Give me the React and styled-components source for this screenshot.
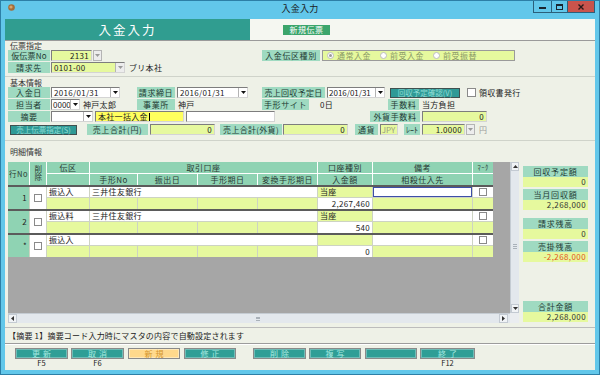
import React from 'react';
import styled, { createGlobalStyle } from 'styled-components';

const FONT = `"Noto Sans CJK JP", "Noto Sans", "DejaVu Sans", sans-serif`;
const MINT = '#9fdac1';
const YG = '#e6f99e';
const HEAD = '#8fd3b3';
const COLS = '21px 16px 42px 47px 59px 59px 59px 54px 99px 20px';

const GlobalStyle = createGlobalStyle`
  html, body { margin: 0; padding: 0; background: #62c7ea; }
  body { font-family: ${FONT}; font-size: 8px; line-height: 1.1; color: #222; }
  * { box-sizing: border-box; }
`;

const Window = styled.div`
  width: 600px;
  height: 375px;
  background: #62c7ea;
  border: 1px solid #2d7fa6;
  display: flex;
  flex-direction: column;
  overflow: hidden;
`;

const TitleBar = styled.div`
  height: 18px;
  flex: none;
  display: grid;
  grid-template-columns: 1fr auto 1fr;
  align-items: start;
`;
const AppIcon = styled.svg`
  margin: 3px 0 0 7px;
`;
const Title = styled.div`
  font-size: 9px;
  line-height: 16px;
  color: #1b1b1b;
  letter-spacing: 0.3px;
`;
const Controls = styled.div`
  justify-self: end;
  display: flex;
  margin-right: 4px;
  height: 12px;
  border: 1px solid #2b5f7a;
  border-top: none;
`;
const CtrlBtn = styled.div`
  width: ${p => p.$w}px;
  display: flex;
  align-items: center;
  justify-content: center;
  background: ${p => (p.$close ? '#c9544c' : 'transparent')};
  & + & { border-left: 1px solid #2b5f7a; }
`;

const Body = styled.div`
  margin: 0 4px;
  height: 351px;
  background: #eef1e7;
  display: flex;
  flex-direction: column;
  flex: none;
`;

const Header = styled.div`
  height: 22px;
  display: flex;
  flex: none;
  border-bottom: 1px solid #9a9a9a;
`;
const TealBand = styled.div`
  width: 245px;
  background: #309d90;
  color: #fff;
  font-size: 12.5px;
  letter-spacing: 2px;
  display: flex;
  align-items: center;
  justify-content: center;
`;
const HeadRight = styled.div`
  flex: 1;
  background: #f5f7f1;
  display: flex;
  align-items: center;
  padding-left: 33px;
`;
const Badge = styled.div`
  width: 47px;
  height: 10px;
  background: #3ba56b;
  color: #fff;
  font-size: 8px;
  line-height: 10px;
  text-align: center;
  letter-spacing: 0.5px;
`;

const SectionTitle = styled.div`
  height: ${p => p.$h}px;
  line-height: ${p => p.$h}px;
  margin: ${p => p.$mt || 0}px 0 0 5px;
  font-size: 8px;
  color: #333;
  flex: none;
`;
const Rule = styled.div`
  height: 1px;
  margin-top: ${p => p.$mt}px;
  background: #cfd3ca;
  flex: none;
`;

const Row = styled.div`
  display: flex;
  height: 11px;
  margin-top: ${p => p.$mt || 0}px;
  flex: none;
  align-items: stretch;
`;
const Group = styled.div`
  display: flex;
  width: ${p => p.$w}px;
  margin-left: ${p => p.$ml || 0}px;
  flex: none;
  align-items: stretch;
`;
const Label = styled.div`
  width: ${p => p.$w}px;
  margin-left: ${p => p.$ml || 0}px;
  background: ${MINT};
  color: #1e3b33;
  display: flex;
  align-items: center;
  justify-content: center;
  white-space: nowrap;
  letter-spacing: ${p => p.$ls ?? 0.6}px;
  line-height: 1;
  flex: none;
`;
const TONES = { yg: YG, white: '#fff', yellow: '#ffff5e' };
const Field = styled.div`
  width: ${p => p.$w}px;
  margin-left: ${p => p.$ml || 0}px;
  background: ${p => TONES[p.$tone || 'yg']};
  border: 1px solid;
  border-color: #7d7d7d #d4d4d4 #d4d4d4 #7d7d7d;
  display: flex;
  align-items: center;
  justify-content: ${p => (p.$align === 'right' ? 'flex-end' : p.$align === 'center' ? 'center' : 'flex-start')};
  padding: 0 ${p => (p.$arrow ? 0 : 2)}px 0 ${p => (p.$tight ? 1 : 2)}px;
  color: ${p => p.$color || '#222'};
  white-space: nowrap;
  overflow: hidden;
  letter-spacing: ${p => (p.$tight ? 0 : 0.3)}px;
  line-height: 1;
  flex: none;
`;
const Value = styled.span`
  flex: 1;
  min-width: 0;
  text-align: ${p => p.$align || 'left'};
  padding-right: 1px;
`;
const Caret = styled.span`
  display: inline-block;
  width: 1px;
  height: 8px;
  background: #000;
  margin-left: 1px;
  vertical-align: middle;
`;
const Arrow = styled.div`
  width: 9px;
  height: 100%;
  background: ${p => (p.$gray ? '#ededed' : '#fff')};
  border-left: 1px solid #b4b4b4;
  display: flex;
  align-items: center;
  justify-content: center;
  flex: none;
`;
const LoneArrow = styled(Arrow)`
  margin-left: ${p => p.$ml || 1}px;
  border: 1px solid #b4b4b4;
`;
const Plain = styled.div`
  margin-left: ${p => p.$ml || 0}px;
  display: flex;
  align-items: center;
  white-space: nowrap;
  color: ${p => p.$color || '#222'};
  letter-spacing: 0.3px;
  line-height: 1;
`;
const TealBtn = styled.div`
  width: ${p => p.$w}px;
  height: 10px;
  align-self: center;
  margin-left: ${p => p.$ml || 0}px;
  background: #2f9a96;
  border: 1px solid #40504f;
  color: #8fdcd5;
  font-size: 7.5px;
  line-height: 1;
  display: flex;
  align-items: center;
  justify-content: center;
  white-space: nowrap;
  flex: none;
`;
const Check = styled.div`
  width: ${p => p.$s || 9}px;
  height: ${p => p.$s || 9}px;
  margin-left: ${p => p.$ml || 0}px;
  align-self: center;
  background: #fff;
  border: 1px solid #8a8a8a;
  flex: none;
`;
const RadioGroup = styled.div`
  width: ${p => p.$w}px;
  margin-left: ${p => p.$ml || 0}px;
  background: ${YG};
  border: 1px solid #9a9a9a;
  display: flex;
  align-items: center;
  padding-left: 4px;
  flex: none;
`;
const RadioItem = styled.div`
  width: 53px;
  display: flex;
  align-items: center;
  color: #8a9a66;
  letter-spacing: 0.5px;
  line-height: 1;
  flex: none;
`;
const RadioDot = styled.span`
  width: 7px;
  height: 7px;
  border-radius: 50%;
  background: #fff;
  border: 1px solid #bdbdbd;
  margin-right: 3px;
  display: flex;
  align-items: center;
  justify-content: center;
  &::after {
    content: '';
    width: 3px;
    height: 3px;
    border-radius: 50%;
    background: ${p => (p.$on ? '#9a9a9a' : 'transparent')};
  }
`;

/* detail grid */
const Detail = styled.div`
  display: flex;
  margin: 5px 0 0 3px;
  height: 161px;
  flex: none;
`;
const GridPanel = styled.div`
  width: 511px;
  display: grid;
  grid-template-columns: 502px 9px;
  grid-template-rows: 151px 10px;
`;
const View = styled.div`
  background: #a6a6a6;
  overflow: hidden;
`;
const HeadGrid = styled.div`
  display: grid;
  grid-template-columns: ${COLS};
  grid-template-rows: 11px 11px;
  gap: 1px;
  background: #fff;
  width: 485px;
`;
const HCell = styled.div`
  grid-column: ${p => p.$c};
  grid-row: ${p => p.$r};
  background: ${HEAD};
  display: flex;
  align-items: center;
  justify-content: center;
  color: #2a3a33;
  font-size: ${p => p.$fs || 8}px;
  line-height: 1;
  letter-spacing: ${p => (p.$vertical ? 1 : 0.5)}px;
  white-space: nowrap;
  writing-mode: ${p => (p.$vertical ? 'vertical-rl' : 'horizontal-tb')};
`;
const DataRow = styled.div`
  display: grid;
  grid-template-columns: ${COLS};
  grid-template-rows: 10px 11px;
  gap: 1px;
  background: #cdd3c3;
  width: 485px;
  border-top: 2px solid #5b5b5b;
`;
const CELL_BG = { white: '#fff', yg: YG, head: HEAD };
const DCell = styled.div`
  grid-column: ${p => p.$c};
  grid-row: ${p => p.$r};
  background: ${p => CELL_BG[p.$bg || 'white']};
  display: flex;
  align-items: center;
  justify-content: ${p => (p.$j === 'end' ? 'flex-end' : p.$j === 'center' ? 'center' : 'flex-start')};
  padding: 0 2px;
  color: #222;
  white-space: nowrap;
  letter-spacing: 0.3px;
  line-height: 1;
  box-shadow: ${p => (p.$focus ? 'inset 0 0 0 1px #3d4fa8' : 'none')};
`;
const VScroll = styled.div`
  grid-column: 2;
  grid-row: 1;
  background: #e3e8ed;
  border-left: 1px solid #c5ccd3;
  display: flex;
  flex-direction: column;
`;
const HScroll = styled.div`
  grid-column: 1;
  grid-row: 2;
  background: #e3e8ed;
  border-top: 1px solid #c5ccd3;
  display: flex;
`;
const Corner = styled.div`
  grid-column: 2;
  grid-row: 2;
  background: #eaedf0;
`;
const ScrollBtn = styled.div`
  width: ${p => (p.$h ? 9 : 8)}px;
  height: 9px;
  background: #f0f3f6;
  border: 1px solid #c3cad2;
  display: flex;
  align-items: center;
  justify-content: center;
  flex: none;
  margin-right: ${p => p.$mr || 0}px;
`;
const Track = styled.div`
  flex: 1;
  display: flex;
  align-items: center;
  justify-content: center;
`;
const Grip = styled.div`
  width: ${p => p.$w}px;
  height: ${p => p.$h}px;
  margin-top: ${p => p.$mt || 0}px;
  border-top: 1px solid #a9b1b9;
  border-bottom: 1px solid #a9b1b9;
  background: linear-gradient(#a9b1b9, #a9b1b9) center / 100% 1px no-repeat;
`;

const Side = styled.div`
  width: 65px;
  margin-left: 4px;
  display: flex;
  flex-direction: column;
  padding: 4px 0 1px;
`;
const SumBox = styled.div`
  display: flex;
  flex-direction: column;
  margin-top: ${p => (p.$bottom ? 'auto' : `${p.$mt || 0}px`)};
`;
const SumLabel = styled.div`
  height: 11px;
  background: ${MINT};
  display: flex;
  align-items: center;
  justify-content: center;
  color: #1e3b33;
  letter-spacing: 0.8px;
  line-height: 1;
`;
const SumValue = styled.div`
  height: 10px;
  line-height: 10px;
  background: ${YG};
  text-align: right;
  padding-right: 2px;
  letter-spacing: 0.4px;
  color: ${p => (p.$neg ? '#e2541b' : '#333')};
`;

const FootRule = styled.div`
  margin-top: 4px;
  height: 1px;
  background: #bcbcbc;
  flex: none;
`;
const Message = styled.div`
  height: 15px;
  line-height: 15px;
  padding-left: 3px;
  color: #222;
  flex: none;
  letter-spacing: 0.2px;
`;
const DoubleRule = styled.div`
  height: 2px;
  border-top: 1px solid #9c9c9c;
  border-bottom: 1px solid #fff;
  flex: none;
`;
const ButtonBar = styled.div`
  display: flex;
  margin-top: 3px;
  flex: none;
`;
const Slot = styled.div`
  width: ${p => p.$w}px;
  margin-left: ${p => p.$ml}px;
  display: flex;
  flex-direction: column;
  flex: none;
`;
const FButton = styled.div`
  height: 11px;
  background: ${p => (p.$new ? '#ffd98c' : '#2f9e96')};
  border: 1px solid #8a8a8a;
  box-shadow: inset 0 0 0 1px ${p => (p.$new ? '#ffe9b8' : '#6fbcb6')};
  color: ${p => (p.$new ? '#d3952c' : '#a6e9e0')};
  display: flex;
  align-items: center;
  justify-content: center;
  letter-spacing: 3px;
  padding-left: 3px;
  line-height: 1;
  overflow: hidden;
`;
const FKey = styled.div`
  height: 8px;
  line-height: 8px;
  text-align: center;
  color: #222;
  font-size: 7.5px;
`;

const Tri = ({ dir = 'down', color = '#111' }) => {
  const pts = {
    down: '0,0 5,0 2.5,3',
    up: '0,3 5,3 2.5,0',
    left: '3,0 3,5 0,2.5',
    right: '0,0 0,5 3,2.5',
  }[dir];
  const vertical = dir === 'up' || dir === 'down';
  return (
    <svg width={vertical ? 5 : 3} height={vertical ? 3 : 5} viewBox={vertical ? '0 0 5 3' : '0 0 3 5'}>
      <polygon points={pts} fill={color} />
    </svg>
  );
};

const Combo = ({ w, ml, tone = 'white', gray, tight, children }) => (
  <Field $w={w} $ml={ml} $tone={tone} $arrow $tight={tight}>
    <Value>{children}</Value>
    <Arrow $gray={gray}>
      <Tri color={gray ? '#9a9a9a' : '#111'} />
    </Arrow>
  </Field>
);

const rows = [
  { no: '1', den: '振込入', bank: '三井住友銀行', kind: '当座', amount: '2,267,460', focus: true },
  { no: '2', den: '振込料', bank: '三井住友銀行', kind: '当座', amount: '540' },
  { no: '*', den: '振込入', bank: '', kind: '', amount: '0' },
];

const buttons = [
  { t: '更新', k: 'F5', ml: 10, w: 53 },
  { t: '取消', k: 'F6', ml: 3, w: 53 },
  { t: '新規', k: '', ml: 4, w: 52, isNew: true },
  { t: '修正', k: '', ml: 4, w: 52 },
  { t: '削除', k: '', ml: 17, w: 53 },
  { t: '複写', k: '', ml: 3, w: 52 },
  { t: '', k: '', ml: 4, w: 52 },
  { t: '終了', k: 'F12', ml: 3, w: 55 },
];

const sums = [
  { l: '回収予定額', v: '0', mt: 0 },
  { l: '当月回収額', v: '2,268,000', mt: 2 },
  { l: '請求残高', v: '0', mt: 8 },
  { l: '売掛残高', v: '-2,268,000', mt: 2, neg: true },
  { l: '合計金額', v: '2,268,000', bottom: true },
];

export default function App() {
  return (
    <>
      <GlobalStyle />
      <Window>
        <TitleBar>
          <AppIcon width="7" height="7" viewBox="0 0 7 7">
            <circle cx="3.5" cy="3.5" r="3.3" fill="#a36d3a" />
            <circle cx="3" cy="3" r="1.6" fill="#d9a46a" />
          </AppIcon>
          <Title>入金入力</Title>
          <Controls>
            <CtrlBtn $w={17}>
              <svg width="7" height="5" viewBox="0 0 7 5"><rect x="0" y="3" width="7" height="2" fill="#1a2630" /></svg>
            </CtrlBtn>
            <CtrlBtn $w={16}>
              <svg width="7" height="6" viewBox="0 0 7 6"><rect x="0.5" y="0.5" width="6" height="5" fill="none" stroke="#1a2630" /><rect x="0" y="0" width="7" height="2" fill="#1a2630" /></svg>
            </CtrlBtn>
            <CtrlBtn $w={27} $close>
              <svg width="6" height="6" viewBox="0 0 6 6"><path d="M0.5 0.5 L5.5 5.5 M5.5 0.5 L0.5 5.5" stroke="#2a1a1a" strokeWidth="1.4" /></svg>
            </CtrlBtn>
          </Controls>
        </TitleBar>

        <Body>
          <Header>
            <TealBand>入金入力</TealBand>
            <HeadRight>
              <Badge>新規伝票</Badge>
            </HeadRight>
          </Header>

          <SectionTitle $h={9}>伝票指定</SectionTitle>
          <Row>
            <Label $w={42} $ml={3} $ls={0.2}>仮伝票No</Label>
            <Field $w={41} $ml={1} $align="right">2131</Field>
            <LoneArrow $gray $ml={1}><Tri color="#9a9a9a" /></LoneArrow>
            <Label $w={58} $ml={160}>入金伝区種別</Label>
            <RadioGroup $w={193} $ml={2}>
              <RadioItem><RadioDot $on />通常入金</RadioItem>
              <RadioItem><RadioDot />前受入金</RadioItem>
              <RadioItem><RadioDot />前受振替</RadioItem>
            </RadioGroup>
          </Row>
          <Row $mt={1}>
            <Label $w={42} $ml={3}>請求先</Label>
            <Combo w={74} ml={1} tone="yg" gray>0101-00</Combo>
            <Plain $ml={4}>ブリ本社</Plain>
          </Row>

          <Rule $mt={3} />
          <SectionTitle $h={9} $mt={1}>基本情報</SectionTitle>
          <Row>
            <Group $w={129} $ml={3}>
              <Label $w={42}>入金日</Label>
              <Combo w={69} ml={1}>2016/01/31</Combo>
            </Group>
            <Group $w={125}>
              <Label $w={38}>請求締日</Label>
              <Combo w={71} ml={2}>2016/01/31</Combo>
            </Group>
            <Label $w={63} $ls={0.3}>売上回収予定日</Label>
            <Combo w={58} ml={2} tight>2016/01/31</Combo>
            <TealBtn $w={70} $ml={5}>回収予定確認(V)</TealBtn>
            <Check $ml={7} />
            <Plain $ml={3}>領収書発行</Plain>
          </Row>
          <Row $mt={1}>
            <Group $w={129} $ml={3}>
              <Label $w={42}>担当者</Label>
              <Combo w={29} ml={1} tight>0000</Combo>
              <Plain $ml={3}>神戸太郎</Plain>
            </Group>
            <Group $w={125}>
              <Label $w={38}>事業所</Label>
              <Plain $ml={3}>神戸</Plain>
            </Group>
            <Group $w={126}>
              <Label $w={47}>手形サイト</Label>
              <Plain $ml={11}>0日</Plain>
            </Group>
            <Label $w={31}>手数料</Label>
            <Plain $ml={3}>当方負担</Plain>
          </Row>
          <Row $mt={1}>
            <Label $w={42} $ml={3}>摘要</Label>
            <Combo w={42} ml={1}></Combo>
            <Field $w={89} $ml={2} $tone="yellow">本社一括入金<Caret /></Field>
            <Field $w={89} $ml={2} $tone="white" />
            <Label $w={50} $ml={95}>外貨手数料</Label>
            <Field $w={65} $ml={2} $align="right">0</Field>
          </Row>
          <Row $mt={2}>
            <TealBtn $w={67} $ml={5}>売上伝票指定(S)</TealBtn>
            <Label $w={61} $ml={10}>売上合計(円)</Label>
            <Field $w={65} $ml={2} $align="right">0</Field>
            <Label $w={62} $ml={5} $ls={0.3}>売上合計(外貨)</Label>
            <Field $w={65} $ml={1} $align="right">0</Field>
            <Label $w={23} $ml={7}>通貨</Label>
            <Field $w={18} $ml={2} $align="center" $color="#9aa080" $tight>JPY</Field>
            <Label $w={16} $ml={6} $ls={0}>ﾚｰﾄ</Label>
            <Field $w={43} $ml={2} $align="right">1.0000</Field>
            <LoneArrow $gray $ml={1}><Tri color="#9a9a9a" /></LoneArrow>
            <Plain $ml={4} $color="#9a9a9a">円</Plain>
          </Row>

          <Rule $mt={5} />
          <SectionTitle $h={10} $mt={6}>明細情報</SectionTitle>

          <Detail>
            <GridPanel>
              <View>
                <HeadGrid>
                  <HCell $c="1" $r="1 / 3" $fs={7.5}>行No</HCell>
                  <HCell $c="2" $r="1 / 3" $fs={7.5} $vertical>削除</HCell>
                  <HCell $c="3" $r="1">伝区</HCell>
                  <HCell $c="3" $r="2" />
                  <HCell $c="4 / 8" $r="1">取引口座</HCell>
                  <HCell $c="4" $r="2">手形No</HCell>
                  <HCell $c="5" $r="2">振出日</HCell>
                  <HCell $c="6" $r="2">手形期日</HCell>
                  <HCell $c="7" $r="2">変換手形期日</HCell>
                  <HCell $c="8" $r="1">口座種別</HCell>
                  <HCell $c="8" $r="2">入金額</HCell>
                  <HCell $c="9" $r="1">備考</HCell>
                  <HCell $c="9" $r="2">相殺仕入先</HCell>
                  <HCell $c="10" $r="1" $fs={6.5}>ﾏｰｸ</HCell>
                  <HCell $c="10" $r="2" />
                </HeadGrid>
                {rows.map(r => (
                  <DataRow key={r.no}>
                    <DCell $c="1" $r="1 / 3" $bg="head" $j="end">{r.no}</DCell>
                    <DCell $c="2" $r="1 / 3" $j="center"><Check $s={8} /></DCell>
                    <DCell $c="3" $r="1">{r.den}</DCell>
                    <DCell $c="3" $r="2" $bg="yg" />
                    <DCell $c="4 / 8" $r="1">{r.bank}</DCell>
                    <DCell $c="4" $r="2" $bg="yg" />
                    <DCell $c="5" $r="2" $bg="yg" />
                    <DCell $c="6" $r="2" $bg="yg" />
                    <DCell $c="7" $r="2" $bg="yg" />
                    <DCell $c="8" $r="1" $bg="yg">{r.kind}</DCell>
                    <DCell $c="8" $r="2" $j="end">{r.amount}</DCell>
                    <DCell $c="9" $r="1" $focus={r.focus} />
                    <DCell $c="9" $r="2" $bg="yg" />
                    <DCell $c="10" $r="1" $j="center"><Check $s={8} /></DCell>
                    <DCell $c="10" $r="2" $bg="yg" />
                  </DataRow>
                ))}
              </View>
              <VScroll>
                <ScrollBtn><Tri dir="up" color="#333" /></ScrollBtn>
                <Track>
                  <Grip $w={4} $h={5} $mt={18} />
                </Track>
                <ScrollBtn><Tri dir="down" color="#333" /></ScrollBtn>
              </VScroll>
              <HScroll>
                <ScrollBtn $h><Tri dir="left" color="#333" /></ScrollBtn>
                <Track>
                  <Grip $w={4} $h={4} />
                </Track>
                <ScrollBtn $h $mr={2}><Tri dir="right" color="#333" /></ScrollBtn>
              </HScroll>
              <Corner />
            </GridPanel>
            <Side>
              {sums.map(s => (
                <SumBox key={s.l} $mt={s.mt} $bottom={s.bottom}>
                  <SumLabel>{s.l}</SumLabel>
                  <SumValue $neg={s.neg}>{s.v}</SumValue>
                </SumBox>
              ))}
            </Side>
          </Detail>

          <FootRule />
          <Message>【摘要 1】摘要コード入力時にマスタの内容で自動設定されます</Message>
          <DoubleRule />
          <ButtonBar>
            {buttons.map((b, i) => (
              <Slot key={i} $ml={b.ml} $w={b.w}>
                <FButton $new={b.isNew}>{b.t}</FButton>
                <FKey>{b.k}</FKey>
              </Slot>
            ))}
          </ButtonBar>
        </Body>
      </Window>
    </>
  );
}
